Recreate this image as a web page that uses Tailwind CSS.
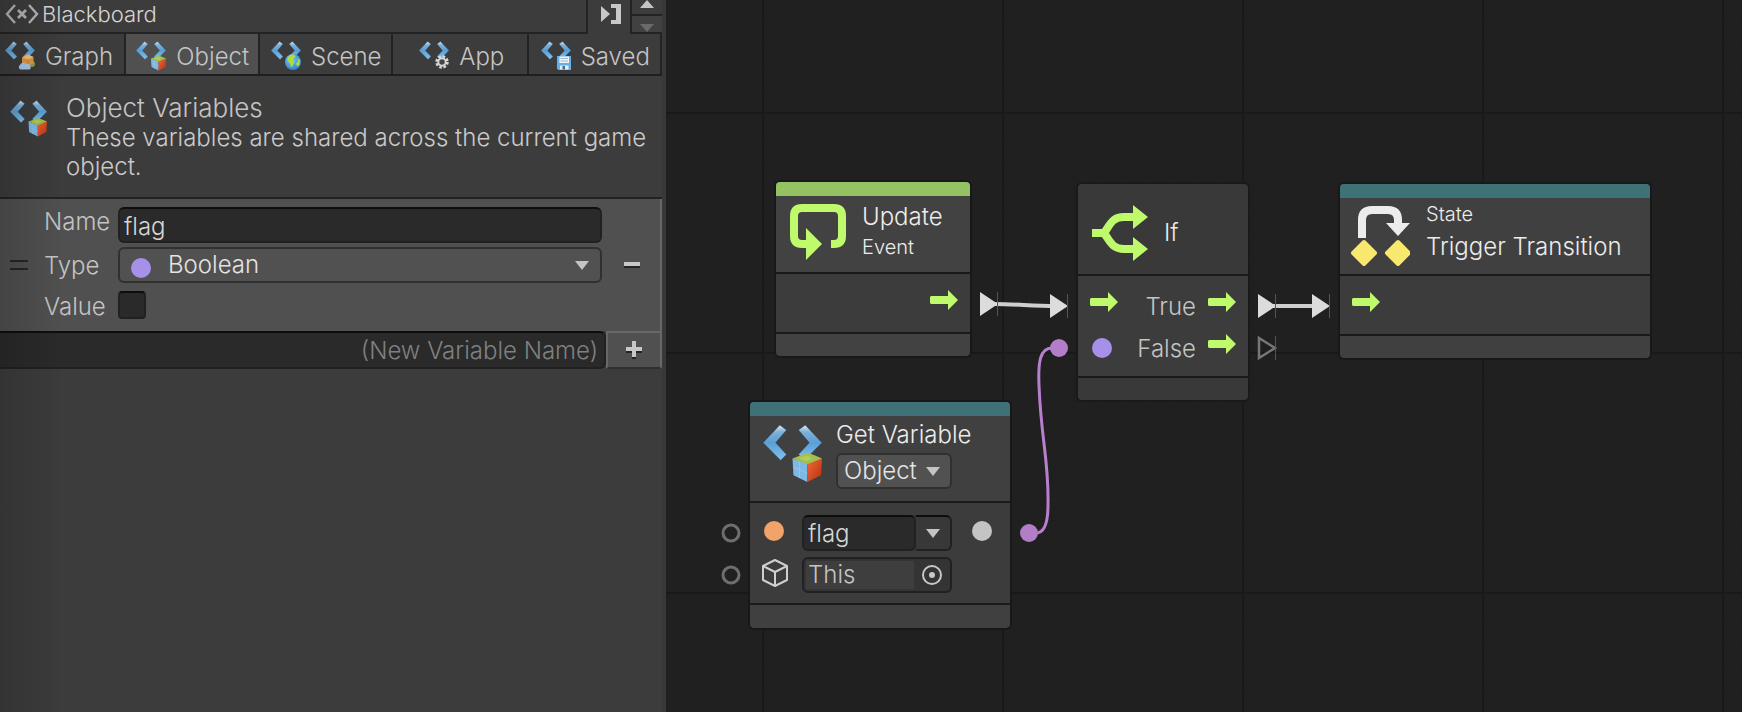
<!DOCTYPE html>
<html lang="en">
<head>
<meta charset="utf-8">
<title>Blackboard</title>
<script src="https://cdn.jsdelivr.net/npm/@tailwindcss/browser@4"></script>
</head>
<body class="min-h-screen bg-[#202020] font-['Inter',sans-serif] text-2xl font-[350] text-[#c4c4c4]">

<!-- Shared icon shapes -->
<svg class="absolute h-0 w-0" aria-hidden="true">
  <defs>
    <linearGradient id="blue" x1="0" y1="0" x2="0" y2="1">
      <stop offset="0" stop-color="#dcebf7"/><stop offset=".2" stop-color="#7fb0d6"/><stop offset=".5" stop-color="#5a9fd6"/><stop offset="1" stop-color="#86c2ee"/>
    </linearGradient>
    <linearGradient id="red" x1="0" y1="0" x2="1" y2="1">
      <stop offset="0" stop-color="#f0683a"/><stop offset="1" stop-color="#b8300c"/>
    </linearGradient>
    <radialGradient id="globe" cx=".4" cy=".35" r=".7">
      <stop offset="0" stop-color="#7cc8f8"/><stop offset="1" stop-color="#2a7fc8"/>
    </radialGradient>
  </defs>
  <symbol id="brackets" viewBox="0 0 60 60">
    <path d="M17 1 24 6 13 19 24 31 18 37 0 19Z" fill="url(#blue)" stroke="#24384a" stroke-opacity=".5"/>
    <path d="M43 1 36 6 47 19 36 31 42 37 60 19Z" fill="url(#blue)" stroke="#24384a" stroke-opacity=".5"/>
  </symbol>
  <symbol id="var-object" viewBox="0 0 60 60">
    <use href="#brackets"/>
    <path d="M30 35 45 40V59L31 52Z" fill="#7db9e6"/>
    <path d="M45 40 60 35 59 52 45 59Z" fill="url(#red)"/>
    <path d="M30 35 38 32 45 29 53 32 60 35 45 41Z" fill="#a3bf4c"/>
    <path d="M36 35 45 32 50 35 44 38Z" fill="#b4cc5c"/>
    <path d="M31 44 45 50M37 38V55" stroke="#93c6ec" fill="none"/>
  </symbol>
  <symbol id="var-graph" viewBox="0 0 60 60">
    <use href="#brackets"/>
    <circle cx="54" cy="46" r="6" fill="#8f9a56"/>
    <path d="M34 33 46 27 57 32V45L46 50 34 46Z" fill="#e09a45"/>
    <path d="M34 33 46 27 57 32 46 37Z" fill="#f3c07a"/>
    <path d="M46 37V48" stroke="#b8752f" stroke-width="1.500"/>
    <path d="M31 57a5 5 0 0 1-1-9 7 7 0 0 1 12-2 6 6 0 0 1 9 5 4 4 0 0 1-3 6Z" fill="#a6c6ea"/>
  </symbol>
  <symbol id="var-scene" viewBox="0 0 60 60">
    <use href="#brackets"/>
    <circle cx="44" cy="42" r="16" fill="url(#globe)"/>
    <path d="M36 30c6-5 12-3 13 1l-5 5 3 6-4 8-3 3-2-9-5-4c-1-4 0-7 3-10ZM53 34l5 5-1 9-5 3-2-6 4-4Z" fill="#b2dc3c"/>
  </symbol>
  <symbol id="var-app" viewBox="0 0 60 60">
    <use href="#brackets"/>
    <circle cx="46" cy="42" r="11" fill="none" stroke="#d8d8d8" stroke-width="5" stroke-dasharray="5.2 3.4"/>
    <circle cx="46" cy="42" r="7.5" fill="#444" stroke="#d8d8d8" stroke-width="4"/>
  </symbol>
  <symbol id="var-saved" viewBox="0 0 60 60">
    <use href="#brackets"/>
    <path d="M32 30H60V58H35L32 55Z" fill="#62b0e8"/>
    <path d="M37 31H56V44H37Z" fill="#eef6fc"/>
    <path d="M39 35H54M39 40H54" stroke="#9fb6c6" stroke-width="2"/>
    <path d="M38 49H55V57H38Z" fill="#e8eef2"/>
    <path d="M43 50H48V57H43Z" fill="#3f6f94"/>
  </symbol>
  <symbol id="flow" viewBox="0 0 28 20">
    <path d="M1 6H18V0L28 10 18 20V14H1L0 13V7Z" fill="#bffa6c"/>
  </symbol>
</svg>

<div class="flex min-h-screen">

  <!-- Blackboard panel -->
  <aside class="relative flex w-[666px] shrink-0 flex-col border-r-4 border-[#383838] bg-[#3c3c3c]">
    <header class="flex h-[34px]">
      <div class="flex flex-1 items-center gap-[3px] border-r-2 border-b-2 border-[#232323] pb-1 pl-[5px]">
        <svg class="h-5 w-[34px]" viewBox="0 0 34 20" fill="none" stroke="#b4b4b4"><path d="M10 1 2 10 10 19M24 1 32 10 24 19" stroke-width="2.4"/><path d="M13 6 21 14M21 6 13 14" stroke-width="2.6"/></svg>
        <h1 class="text-[22px] leading-7 text-[#d6d6d6]">Blackboard</h1>
      </div>
      <button class="flex w-[42px] justify-center pt-1 pl-1" aria-label="Dock panel">
        <svg class="h-5 w-5" viewBox="0 0 20 20" fill="#c8c8c8"><path d="M0 2 9 10 0 18ZM10 0H20V20H10V16H15V4H10Z"/></svg>
      </button>
      <div class="flex w-8 flex-col border-b-2 border-l-2 border-[#232323]">
        <button class="flex h-4 justify-center border-b-2 border-[#232323]" aria-label="Scroll up"><svg class="h-2 w-3.5" viewBox="0 0 14 8"><path d="M7 0 14 8H0Z" fill="#c4c4c4"/></svg></button>
        <button class="flex flex-1 items-end justify-center bg-[#414141]" aria-label="Scroll down"><svg class="h-2 w-3.5" viewBox="0 0 14 8"><path d="M0 0H14L7 8Z" fill="#6a6a6a"/></svg></button>
      </div>
    </header>

    <nav class="flex h-[42px] border-b-2 border-[#1f1f1f]">
      <button class="flex w-[126px] items-center justify-center gap-2.5 border-r-2 border-[#232323] pt-1 pr-1.5"><svg class="size-[30px]"><use href="#var-graph"/></svg><span class="pt-0.5">Graph</span></button>
      <button class="flex flex-1 items-center justify-center gap-2.5 border-r-2 border-[#232323] bg-[#505050] pt-1 pl-0.5"><svg class="size-[30px]"><use href="#var-object"/></svg><span class="pt-0.5">Object</span></button>
      <button class="flex flex-1 items-center justify-center gap-2.5 border-r-2 border-[#232323] pt-1 pl-0.5"><svg class="size-[30px]"><use href="#var-scene"/></svg><span class="pt-0.5">Scene</span></button>
      <button class="flex flex-1 items-center justify-center gap-2.5 border-r-2 border-[#232323] pt-1 pl-1"><svg class="size-[30px]"><use href="#var-app"/></svg><span class="pt-0.5">App</span></button>
      <button class="flex flex-1 items-center justify-center gap-2.5 border-r-2 border-[#232323] pt-1 pl-0.5"><svg class="size-[30px]"><use href="#var-saved"/></svg><span class="pt-0.5">Saved</span></button>
    </nav>

    <section class="flex gap-[19px] border-b-2 border-[#232323] pt-[18px] pr-1.5 pb-4 pl-2.5">
      <svg class="mt-1.5 size-[37px] shrink-0"><use href="#var-object"/></svg>
      <div>
        <h2 class="text-[26px] leading-7">Object Variables</h2>
        <p class="pt-px leading-[29px] font-light text-[#cacaca]">These variables are shared across the current game object.</p>
      </div>
    </section>

    <section class="flex h-[132px] items-center border-r-2 border-[#686868] bg-[#505050] pl-2.5">
      <div class="h-2.5 w-[18px] border-y-2 border-[#252525]"></div>
      <div class="ml-4 grid flex-1 grid-cols-[74px_1fr] gap-y-1 self-start pt-2">
        <label for="name" class="h-9 leading-[30px]">Name</label>
        <input id="name" value="flag" class="h-9 w-full rounded-md border-2 border-[#212121] border-t-[#0d0d0d] bg-[#2a2a2a] px-1 pt-0.5 text-[#d6d6d6] outline-none">
        <label for="type" class="leading-[38px]">Type</label>
        <div class="relative">
          <select id="type" class="block h-9 w-full appearance-none rounded-md border-2 border-[#303030] bg-[#515151] pb-1 pl-12 text-[#e4e4e4] outline-none"><option>Boolean</option></select>
          <span class="absolute top-[11px] left-[13px] size-5 rounded-full bg-[#a790ea]"></span>
          <svg class="absolute top-3.5 right-[13px] h-[9px] w-3.5" viewBox="0 0 14 9"><path d="M0 0H14L7 9Z" fill="#c4c4c4"/></svg>
        </div>
        <label for="value" class="leading-9">Value</label>
        <input id="value" type="checkbox" class="mt-0.5 size-7 appearance-none rounded border-2 border-[#212121] border-t-[#0d0d0d] bg-[#2a2a2a]">
      </div>
      <button class="flex w-[58px] justify-center pl-0.5" aria-label="Remove variable"><svg class="h-1.5 w-4" viewBox="0 0 16 6"><path d="M0 4H16V6H0Z" fill="#252525"/><path d="M0 0H16V4H0Z" fill="#c8c8c8"/></svg></button>
    </section>

    <div class="flex h-[38px]">
      <input aria-label="New variable name" placeholder="(New Variable Name)" class="min-w-0 flex-1 rounded-r-md border-2 border-l-0 border-[#212121] border-t-[#0d0d0d] bg-[#2a2a2a] px-1.5 pt-0.5 text-right outline-none placeholder:text-[#808080]">
      <button class="flex w-14 items-center justify-center border-2 border-[#686868] border-b-[#303030] bg-[#505050]" aria-label="Add variable"><svg class="h-[18px] w-4" viewBox="0 0 16 18"><path d="M0 8H16V12H10V18H6V12H0Z" fill="#252525"/><path d="M6 0H10V6H16V10H10V16H6V10H0V6H6Z" fill="#c8c8c8"/></svg></button>
    </div>
    <div class="pointer-events-none absolute inset-y-0 left-0 w-16 bg-linear-to-r from-black/15 to-transparent"></div>
  </aside>

  <!-- Graph canvas -->
  <main class="relative flex-1 overflow-hidden bg-[#202020]">
    <svg class="absolute inset-0 h-full w-full" aria-hidden="true">
      <defs>
        <pattern id="minor" width="24" height="24" x="96" y="112" patternUnits="userSpaceOnUse"><path d="M0 1H24M1 0V24" stroke="#1d1d1d" stroke-width="2" stroke-opacity=".5"/></pattern>
        <pattern id="major" width="240" height="240" x="96" y="112" patternUnits="userSpaceOnUse"><path d="M0 1H240M1 0V240" stroke="#191919" stroke-width="2"/></pattern>
      </defs>
      <rect width="100%" height="100%" fill="url(#minor)"/>
      <rect width="100%" height="100%" fill="url(#major)"/>
      <!-- Ports and wires -->
      <path d="M328 304C350 304 366 306 390 306M606 306H650" fill="none" stroke="#cfcfcf" stroke-width="4"/>
      <path d="M314 292 332 304 314 316ZM384 294 402 306 384 318ZM592 294 610 306 592 318ZM646 294 664 306 646 318Z" fill="#dcdcdc"/>
      <path d="M593 338 609 348 593 358Z" fill="none" stroke="#777" stroke-width="2.500"/>
      <path d="M331.500 292V316M401.500 294V318M609.500 294V318M663.500 294V318M609.500 336V360" stroke="#555" fill="none"/>
      <path d="M386 348C374 348 372 362 373 385C375 440 383 460 382 505C382 522 379 533 370 533" fill="none" stroke="#b87fce" stroke-width="3"/>
      <circle cx="393" cy="348" r="9" fill="#b37dc8"/><circle cx="363" cy="533" r="9" fill="#b37dc8"/>
      <g fill="none" stroke="#6e6e6e" stroke-width="3"><circle cx="65" cy="533" r="8"/><circle cx="65" cy="575" r="8"/></g>
    </svg>

    <!-- Update event -->
    <article class="absolute top-[182px] left-[110px] w-[194px] rounded-sm bg-[#424242] shadow-[0_0_0_2px_#181818]">
      <div class="h-3.5 rounded-t-sm bg-[#94c263]"></div>
      <header class="flex h-[78px] gap-4 border-b-2 border-[#1a1a1a] pt-2 pl-3.5 text-[#ececec]">
        <svg class="size-14" viewBox="0 0 56 56"><path d="M41 40H44Q52 40 52 32V12Q52 4 44 4H12Q4 4 4 12V32Q4 40 12 40H18" fill="none" stroke="#bffa6c" stroke-width="8"/><path d="M16 24 32 40 16 56Z" fill="#bffa6c"/></svg>
        <div><h3 class="leading-[26px]">Update</h3><p class="mt-1 text-xl leading-[26px]">Event</p></div>
      </header>
      <div class="flex h-[60px] items-start justify-end border-b-2 border-[#1a1a1a] bg-[#3c3c3c] pt-4 pr-3"><svg class="h-5 w-7"><use href="#flow"/></svg></div>
      <div class="h-[22px]"></div>
    </article>

    <!-- If branch -->
    <article class="absolute top-[184px] left-[412px] w-[170px] rounded-sm bg-[#393939] shadow-[0_0_0_2px_#1a1a1a]">
      <header class="flex h-[92px] items-center gap-4 border-b-2 border-[#1a1a1a] pt-2 pl-3.5 text-[#ececec]">
        <svg class="size-14" viewBox="0 0 56 56"><path d="M0 28H14M12 28C18 20 20 12 32 12H42M12 28C18 36 20 44 32 44H42" fill="none" stroke="#bffa6c" stroke-width="8"/><path d="M41 0 56 12 41 24ZM41 32 56 44 41 56Z" fill="#bffa6c"/></svg>
        <h3>If</h3>
      </header>
      <div class="flex h-[102px] flex-col gap-1.5 border-b-2 border-[#1a1a1a] bg-[#3c3c3c] px-3 pt-3">
        <div class="flex h-9"><svg class="mt-1 h-5 w-7"><use href="#flow"/></svg><span class="flex-1 pr-3 text-right leading-[38px]">True</span><svg class="mt-1 h-5 w-7"><use href="#flow"/></svg></div>
        <div class="flex h-9"><span class="mt-2 ml-0.5 size-5 rounded-full bg-[#a790ea]"></span><span class="flex-1 pr-3 text-right leading-[38px]">False</span><svg class="mt-1 h-5 w-7"><use href="#flow"/></svg></div>
      </div>
      <div class="h-[22px]"></div>
    </article>

    <!-- State trigger transition -->
    <article class="absolute top-[184px] left-[674px] w-[310px] rounded-sm bg-[#404040] shadow-[0_0_0_2px_#181818]">
      <div class="h-3.5 rounded-t-sm bg-[#3e7276]"></div>
      <header class="flex h-[78px] gap-4 border-b-2 border-[#1a1a1a] pt-2 pl-[11px] text-[#ececec]">
        <svg class="h-[60px] w-[59px]" viewBox="0 0 59 60"><path d="M11 32V14Q11 4 21 4H37Q47 4 47 14V18" fill="none" stroke="#ececec" stroke-width="8"/><path d="M35 17H59L47 30Z" fill="#ececec"/><path d="M13 36 24 47 13 58 2 47ZM47 36 58 47 47 58 36 47Z" fill="#f9e86e" stroke="#f9e86e" stroke-width="4" stroke-linejoin="round"/></svg>
        <div><p class="text-xl leading-4">State</p><h3 class="mt-2 leading-[34px]">Trigger Transition</h3></div>
      </header>
      <div class="h-[60px] border-b-2 border-[#1a1a1a] bg-[#3c3c3c] pt-4 pl-3"><svg class="h-5 w-7"><use href="#flow"/></svg></div>
      <div class="h-[22px]"></div>
    </article>

    <!-- Get object variable -->
    <article class="absolute top-[402px] left-[84px] w-[260px] rounded-sm bg-[#404040] shadow-[0_0_0_2px_#181818]">
      <div class="h-3.5 rounded-t-sm bg-[#3e7276]"></div>
      <header class="flex h-[87px] gap-3.5 border-b-2 border-[#1a1a1a] pt-2 pl-[13px] text-[#ececec]">
        <svg class="size-[59px]"><use href="#var-object"/></svg>
        <div>
          <h3 class="leading-[22px]">Get Variable</h3>
          <div class="relative mt-[7px] w-[116px]">
            <select aria-label="Variable kind" class="block h-9 w-full appearance-none rounded-md border-2 border-[#303030] bg-[#515151] pb-0.5 pl-1.5 text-[#e4e4e4] outline-none"><option>Object</option></select>
            <svg class="absolute top-3.5 right-3 h-[9px] w-3.5" viewBox="0 0 14 9"><path d="M0 0H14L7 9Z" fill="#c4c4c4"/></svg>
          </div>
        </div>
      </header>
      <div class="flex h-[102px] flex-col gap-1.5 border-b-2 border-[#1a1a1a] bg-[#3c3c3c] pt-3 pr-[18px] pl-3">
        <div class="flex">
          <span class="mt-1.5 ml-0.5 size-5 rounded-full bg-[#f2a369]"></span>
          <div class="ml-[18px] flex h-9 w-[150px] rounded-md bg-[#343434]">
            <input aria-label="Variable name" value="flag" class="w-[114px] rounded-md border-2 border-[#212121] border-t-[#0d0d0d] bg-[#2a2a2a] px-1 pt-0.5 text-[#d6d6d6] outline-none">
            <button class="flex flex-1 items-center justify-center rounded-r-md border-2 border-l-0 border-[#212121] border-t-[#0d0d0d] bg-[#383838]" aria-label="Choose variable"><svg class="h-[9px] w-3.5" viewBox="0 0 14 9"><path d="M0 0H14L7 9Z" fill="#c4c4c4"/></svg></button>
          </div>
          <span class="mt-1.5 ml-5 size-5 rounded-full bg-[#c4c4c4]"></span>
        </div>
        <div class="flex">
          <svg class="mt-0.5 h-7 w-[26px]" viewBox="0 0 26 28" fill="none" stroke="#cfcfcf" stroke-width="2" stroke-linejoin="round"><path d="M13 1 25 7V21L13 27 1 21V7ZM1 7 13 13 25 7M13 13V27"/></svg>
          <div class="ml-3.5 flex h-9 w-[150px] rounded-md border-2 border-[#212121] bg-[#343434] p-0.5">
            <input aria-label="Target object" value="This" readonly class="w-[108px] bg-[#3e3e3e] px-0.5 outline-none">
            <button class="flex flex-1 items-center justify-center pl-0.5" aria-label="Pick object"><svg class="size-5" viewBox="0 0 20 20"><circle cx="10" cy="10" r="9" fill="none" stroke="#c8c8c8" stroke-width="2"/><circle cx="10" cy="10" r="3" fill="#c8c8c8"/></svg></button>
          </div>
        </div>
      </div>
      <div class="h-[23px]"></div>
    </article>
  </main>
</div>
</body>
</html>
